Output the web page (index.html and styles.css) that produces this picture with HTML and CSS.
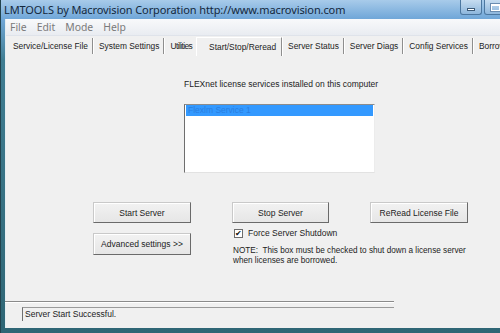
FILE: index.html
```html
<!DOCTYPE html>
<html lang="en">
<head>
  <meta charset="UTF-8" />
  <title>LMTOOLS</title>
  <link rel="stylesheet" href="styles.css">
</head>
<body>
  <div class="window">
    <div class="titlebar">
      <span class="title">LMTOOLS by Macrovision Corporation http://www.macrovision.com</span>
      <div class="caption-btns">
        <span class="cap-btn min"><i></i></span>
        <span class="cap-btn max"><i></i></span>
      </div>
    </div>

    <div class="client">
      <nav class="menubar">
        <span>File</span>
        <span>Edit</span>
        <span>Mode</span>
        <span>Help</span>
      </nav>

      <div class="tabs">
        <span class="tab">Service/License File</span>
        <span class="tab">System Settings</span>
        <span class="tab narrow">Utilities</span>
        <span class="tab active">Start/Stop/Reread</span>
        <span class="tab">Server Status</span>
        <span class="tab">Server Diags</span>
        <span class="tab">Config Services</span>
        <span class="tab">Borrowing</span>
      </div>

      <div class="panel">
        <div class="services">
          <p class="services-label">FLEXnet license services installed on this computer</p>
          <div class="listbox">
            <div class="list-item selected">Flexlm Service 1</div>
          </div>
        </div>

        <div class="actions">
          <button class="btn">Start Server</button>
          <button class="btn">Stop Server</button>
          <button class="btn">ReRead License File</button>

          <button class="btn advanced">Advanced settings &gt;&gt;</button>
          <div class="force">
            <label class="check">
              <span class="box">&#10004;</span>
              Force Server Shutdown
            </label>
            <p class="note">NOTE:&nbsp; This box must be checked to shut down a license server<br>when licenses are borrowed.</p>
          </div>
        </div>
      </div>

      <div class="statusbar">
        <div class="status-field">Server Start Successful.</div>
      </div>
    </div>
  </div>
</body>
</html>
```

FILE: styles.css
```css
:root {
  --face: #f0f0f0;
  --text: #1c1c1c;
  --shadow: #7a7a7a;
  --light: #ffffff;
  --select: #3399ff;
}

* {
  margin: 0;
  padding: 0;
  box-sizing: border-box;
}

body {
  width: 500px;
  height: 333px;
  overflow: hidden;
  font-family: "Liberation Sans", Arial, sans-serif;
  color: var(--text);
}

.window {
  width: 500px;
  height: 333px;
  display: flex;
  flex-direction: column;
  padding: 0 0 5px 4px;
  background: linear-gradient(180deg, #a8cbea 0px, #72a8d9 18px, #3f7d92 60px, #2f6675 100%);
  border-left: 1px solid #22434e;
  overflow: hidden;
}

/* title bar */
.titlebar {
  height: 19px;
  display: flex;
  align-items: center;
  justify-content: space-between;
  margin-left: -1px;
}

.title {
  font-family: "Noto Sans", "Open Sans", sans-serif;
  font-size: 11px;
  color: #14283c;
  letter-spacing: -0.1px;
  white-space: nowrap;
}

.caption-btns {
  display: flex;
  gap: 2px;
  align-self: flex-start;
  margin-right: -6px;
}

.cap-btn {
  width: 22px;
  height: 15px;
  border: 1px solid #4c77a0;
  border-top: none;
  border-radius: 0 0 3px 3px;
  background: linear-gradient(180deg, #c6dcf0, #8db6dc);
  display: flex;
  align-items: center;
  justify-content: center;
}

.cap-btn.min i {
  width: 8px;
  height: 3px;
  background: #fff;
  border: 1px solid #3c5a78;
  margin-top: 4px;
}

.cap-btn.max i {
  width: 9px;
  height: 7px;
  border: 1px solid #fff;
  border-top-width: 2px;
  outline: 1px solid #6a8cb0;
}

/* client area */
.client {
  flex: 1;
  display: flex;
  flex-direction: column;
  background: var(--face);
  border-left: 1px solid #e4eef2;
}

.menubar {
  height: 17px;
  display: flex;
  align-items: center;
  padding-left: 4px;
  gap: 10px;
  background: linear-gradient(180deg, #f8f9fb, #e9ecf1);
  border-bottom: 1px solid #dfe3ea;
  font-family: "Noto Sans", "Open Sans", sans-serif;
  font-size: 10.4px;
  color: #7a7a7a;
}

/* tabs */
.tabs {
  height: 20px;
  display: flex;
  align-items: flex-end;
  padding-left: 2px;
  white-space: nowrap;
  font-size: 8.4px;
}

.tab {
  height: 16px;
  line-height: 16px;
  padding: 0 4px 0 5px;
  border-right: 1px solid #8e8e8e;
  box-shadow: 1px 0 0 var(--light);
  margin-right: 1px;
  margin-bottom: 2px;
}

.tab.narrow {
  letter-spacing: -0.6px;
  padding-right: 3px;
  border-right: none;
  box-shadow: none;
}

.tab.active {
  height: 19px;
  line-height: 18px;
  margin-bottom: 0;
  padding-left: 12px;
  padding-right: 5px;
  border-top: 1px solid var(--light);
  border-left: 1px solid var(--light);
}

.tab:last-child {
  border-right: none;
  box-shadow: none;
}

/* main panel */
.panel {
  flex: 1;
  padding-top: 23px;
}

.services {
  margin-left: 178px;
  width: 192px;
}

.services-label {
  font-size: 8.5px;
  line-height: 11px;
  white-space: nowrap;
}

.listbox {
  margin-top: 14px;
  width: 191px;
  height: 69px;
  background: #fff;
  border-left: 1px solid #6e6e6e;
  border-top: 1px solid #8c8c8c;
  border-right: 1px solid #ececec;
  border-bottom: 1px solid #e2e2e2;
  padding: 0 1px;
}

.list-item {
  height: 11px;
  line-height: 11px;
  font-size: 8.5px;
  padding-left: 2px;
}

.list-item.selected {
  background: var(--select);
  color: #2a7ee0;
}

.actions {
  margin-top: 29px;
  margin-left: 87px;
  display: grid;
  grid-template-columns: 98px 97px 98px;
  column-gap: 41px;
  row-gap: 5px;
  align-items: start;
}

.btn {
  height: 21px;
  font-family: "Liberation Sans", Arial, sans-serif;
  font-size: 8.5px;
  color: var(--text);
  background: linear-gradient(180deg, #f2f2f2, #e6e6e6);
  border: 1px solid #c9c9c9;
  border-right-color: #6a6a6a;
  border-bottom-color: #6a6a6a;
  box-shadow: inset 1px 1px 0 #fff;
}

.btn.advanced {
  height: 22px;
  margin-top: 5px;
}

.force {
  grid-column: 2 / 4;
  padding-left: 1px;
}

.check {
  display: flex;
  align-items: center;
  gap: 5px;
  font-size: 8.5px;
  line-height: 10px;
  padding-left: 1px;
}

.box {
  width: 9px;
  height: 9px;
  border: 1px solid #6c6c6c;
  background: #fff;
  font-size: 8px;
  line-height: 7px;
  text-align: center;
  color: #111;
}

.note {
  margin-top: 8px;
  font-size: 8.2px;
  line-height: 10px;
  white-space: nowrap;
}

/* status bar */
.statusbar {
  height: 27px;
  margin-left: -1px;
  width: 389px;
  border-top: 1px solid #8a8a8a;
  box-shadow: inset 0 1px 0 var(--light);
  padding: 5px 0 0 17px;
}

.status-field {
  height: 14px;
  border-left: 1px solid #6f6f6f;
  border-top: 1px solid #9a9a9a;
  font-size: 8.5px;
  line-height: 13px;
  padding-left: 2px;
}
```
